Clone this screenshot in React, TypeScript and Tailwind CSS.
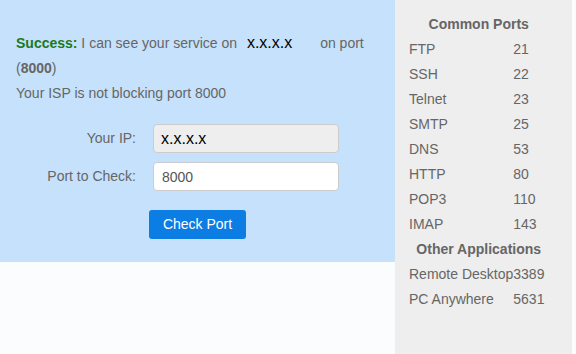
import React from 'react';

const commonPorts: [string, string][] = [
  ['FTP', '21'],
  ['SSH', '22'],
  ['Telnet', '23'],
  ['SMTP', '25'],
  ['DNS', '53'],
  ['HTTP', '80'],
  ['POP3', '110'],
  ['IMAP', '143'],
];

const otherApps: [string, string][] = [
  ['Remote Desktop', '3389'],
  ['PC Anywhere', '5631'],
];

const PortRow: React.FC<{ name: string; port: string }> = ({ name, port }) => (
  <>
    <div className="h-[25px] leading-[25px]">{name}</div>
    <div className="h-[25px] leading-[25px]">{port}</div>
  </>
);

const Sidebar: React.FC = () => {
  return (
    <aside className="w-[177px] shrink-0 bg-[#eeeeee] pl-[14px] pt-[12px] text-[14px] text-[#666]">
      <div className="inline-grid grid-cols-[auto_auto]">
        <div className="col-span-2 h-[25px] pl-[4px] leading-[25px] text-center font-bold">Common Ports</div>
        {commonPorts.map(([n, p]) => (
          <PortRow key={n} name={n} port={p} />
        ))}
        <div className="col-span-2 h-[25px] pl-[4px] leading-[25px] text-center font-bold">Other Applications</div>
        {otherApps.map(([n, p]) => (
          <PortRow key={n} name={n} port={p} />
        ))}
      </div>
    </aside>
  );
};

const App: React.FC = () => {
  return (
    <div
      className="flex h-[354px] w-[576px] bg-[#fafcfd] text-[14px] text-[#666]"
      style={{ fontFamily: '"Liberation Sans", Arial, sans-serif' }}
    >
      <main className="w-[395px] shrink-0">
        <section className="h-[262px] bg-[#c5e1fb] px-[16px] pt-[30px]">
          {/* result message */}
          <div className="leading-[25px]">
            <span className="font-bold text-[#1c7a1c]">Success:</span> I can see your service on{' '}
            <span className="ml-[6px] mr-[24px] text-[16px] text-black">x.x.x.x</span> on port (
            <b>8000</b>)
            <div>Your ISP is not blocking port 8000</div>
          </div>

          {/* form */}
          <div className="mt-[18px] grid grid-cols-[120px_186px] items-center gap-x-[17px] gap-y-[9px]">
            <label className="text-right">Your IP:</label>
            <div className="flex h-[29px] items-center rounded-[4px] border border-[#ccc] bg-[#eeeeee] px-[7px] text-[16px] text-black">
              x.x.x.x
            </div>
            <label className="text-right">Port to Check:</label>
            <input
              defaultValue="8000"
              className="h-[29px] rounded-[4px] border border-[#ccc] bg-white px-[8px] text-[14px] text-[#555] outline-none"
            />
          </div>

          <div className="mt-[20px] flex pl-[133px]">
            <button className="-mt-[1px] h-[29px] w-[97px] rounded-[3px] bg-[#0b7de3] text-[14px] text-white">
              Check Port
            </button>
          </div>
        </section>
      </main>
      <Sidebar />
    </div>
  );
};

export default App;
